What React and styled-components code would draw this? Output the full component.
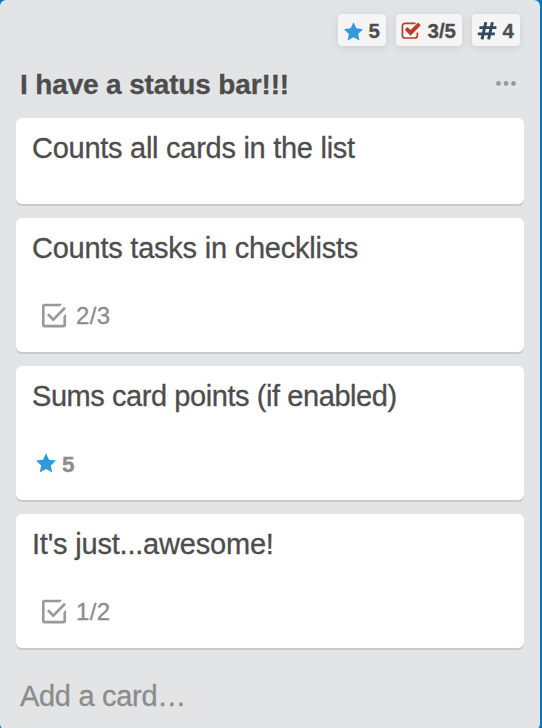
import React from 'react';
import styled, { createGlobalStyle } from 'styled-components';

const GlobalStyle = createGlobalStyle`
  * { box-sizing: border-box; }
  body {
    margin: 0;
    background: #0079bf;
    font-family: "Liberation Sans", Arial, sans-serif;
    color: #4d4d4d;
    -webkit-text-stroke: 0.3px currentColor;
  }
`;

const Board = styled.main`
  width: 542px;
  height: 728px;
  overflow: hidden;
  background: #0079bf;
`;

const List = styled.section`
  width: 540px;
  height: 730px;
  padding: 14px 16px 0;
  border-radius: 6px;
  background: #e2e4e6;
`;

const StatusBar = styled.div`
  display: flex;
  justify-content: flex-end;
  gap: 10px;
  height: 32px;
  padding-right: 4px;
`;

const Counter = styled.div`
  display: flex;
  align-items: center;
  width: ${(p) => p.$width}px;
  height: 32px;
  border-radius: 4px;
  background: #f5f5f5;
  box-shadow: 0 2px 8px rgba(0, 0, 0, 0.1);
  padding: 2px 6px 0 ${(p) => p.$inset || 5}px;
  justify-content: space-between;
  font-size: 20.5px;
  font-weight: 700;
  line-height: 30px;
`;

const ListHeader = styled.header`
  display: flex;
  justify-content: space-between;
  height: 72px;
  padding: 22px 7px 0 4px;
`;

const Title = styled.h2`
  margin: 0;
  font-size: 28px;
  line-height: 34px;
  letter-spacing: ${(p) => p.$tracking}px;
  white-space: nowrap;
`;

const MenuIcon = styled.svg`
  width: 22px;
  height: 8px;
  margin-top: 11px;
`;

const Cards = styled.div`
  display: flex;
  flex-direction: column;
  gap: 14px;
`;

const Card = styled.article`
  height: ${(p) => (p.$plain ? 86 : 134)}px;
  padding: 13px 16px 0;
  border-radius: 6px;
  background: #fff;
  box-shadow: 0 2px 0 #c9cacb;
`;

const CardName = styled.div`
  font-size: 29px;
  line-height: 34px;
  letter-spacing: ${(p) => p.$tracking}px;
  white-space: nowrap;
`;

const Badge = styled.div`
  display: flex;
  align-items: center;
  gap: ${(p) => (p.$strong ? 6 : 10)}px;
  height: 30px;
  margin-top: 35px;
  padding-left: ${(p) => (p.$strong ? 4 : 10)}px;
  color: #8c8c8c;
  font-size: ${(p) => (p.$strong ? 22.5 : 24)}px;
  font-weight: ${(p) => (p.$strong ? 700 : 400)};
  letter-spacing: 0.4px;
`;

const BadgeText = styled.span`
  line-height: 30px;
  padding-top: ${(p) => (p.$strong ? 3 : 2)}px;
`;

const AddCard = styled.div`
  padding: 31px 4px 0;
  color: #8c8c8c;
  font-size: 29px;
  line-height: 34px;
  letter-spacing: ${(p) => p.$tracking}px;
`;

const Glyph = styled.svg`
  flex: none;
  display: block;
`;

const Star = ({ size = 20 }) => (
  <Glyph width={size} height={size} viewBox="0 0 20 20">
    <path fill="#3498db" d="M10 .2 13 6.7l7 .9-5.2 4.9 1.5 7.1L10 16.1l-6.3 3.5 1.5-7.1L0 7.6l7-.9Z" />
  </Glyph>
);

const RedCheck = () => (
  <Glyph width="20" height="18" viewBox="0 0 20 18">
    <path fill="none" stroke="#c0392b" strokeWidth="1.7" d="M14.6 1.4H4A2.6 2.6 0 0 0 1.4 4v9.4A2.6 2.6 0 0 0 4 16h9.8a2.6 2.6 0 0 0 2.6-2.6v-2.8" />
    <path fill="#c0392b" d="m3.8 7.8 2.6-2.7 3.1 3L17 .4l2.8 2.9L9.5 13.8Z" />
  </Glyph>
);

const Hash = () => (
  <Glyph width="20" height="18" viewBox="0 0 20 18">
    <path fill="none" stroke="#34495e" strokeWidth="2.9" d="M8.8.2 5 17.4M15.4.2l-3.8 17.2M2.4 5.6h17M.8 11.9h17" />
  </Glyph>
);

const GreyCheck = () => (
  <Glyph width="24" height="25" viewBox="0 0 24 25">
    <path fill="#999" d="M20 .8 18 3.2H2.6v18.6h18.8v-8.6L24 10.7v11.1a2.7 2.7 0 0 1-2.7 2.7H2.7A2.7 2.7 0 0 1 0 21.8V3.5A2.7 2.7 0 0 1 2.7.8Z" />
    <path fill="none" stroke="#999" strokeWidth="2.7" d="m6 11.2 5.3 5.4L23 4.7" />
  </Glyph>
);

const cards = [
  { name: 'Counts all cards in the list', tracking: -0.27 },
  { name: 'Counts tasks in checklists', tracking: -0.23, badge: '2/3' },
  { name: 'Sums card points (if enabled)', tracking: -0.43, badge: '5', strong: true },
  { name: "It's just...awesome!", tracking: -0.2, badge: '1/2' },
];

export default function App() {
  return (
    <>
      <GlobalStyle />
      <Board>
        <List>
          <StatusBar>
            <Counter $width={48} $inset={6}><Star size={19} />5</Counter>
            <Counter $width={66}><RedCheck />3/5</Counter>
            <Counter $width={48}><Hash />4</Counter>
          </StatusBar>
          <ListHeader>
            <Title $tracking={-0.15}>I have a status bar!!!</Title>
            <MenuIcon viewBox="0 0 22 8" fill="#999">
              <circle cx="3.5" cy="4.5" r="2.4" />
              <circle cx="11" cy="4.5" r="2.4" />
              <circle cx="18.5" cy="4.5" r="2.4" />
            </MenuIcon>
          </ListHeader>
          <Cards>
            {cards.map((card) => (
              <Card key={card.name} $plain={!card.badge}>
                <CardName $tracking={card.tracking}>{card.name}</CardName>
                {card.badge && (
                  <Badge $strong={card.strong}>
                    {card.strong ? <Star /> : <GreyCheck />}
                    <BadgeText $strong={card.strong}>{card.badge}</BadgeText>
                  </Badge>
                )}
              </Card>
            ))}
          </Cards>
          <AddCard $tracking={-0.3}>Add a card…</AddCard>
        </List>
      </Board>
    </>
  );
}
